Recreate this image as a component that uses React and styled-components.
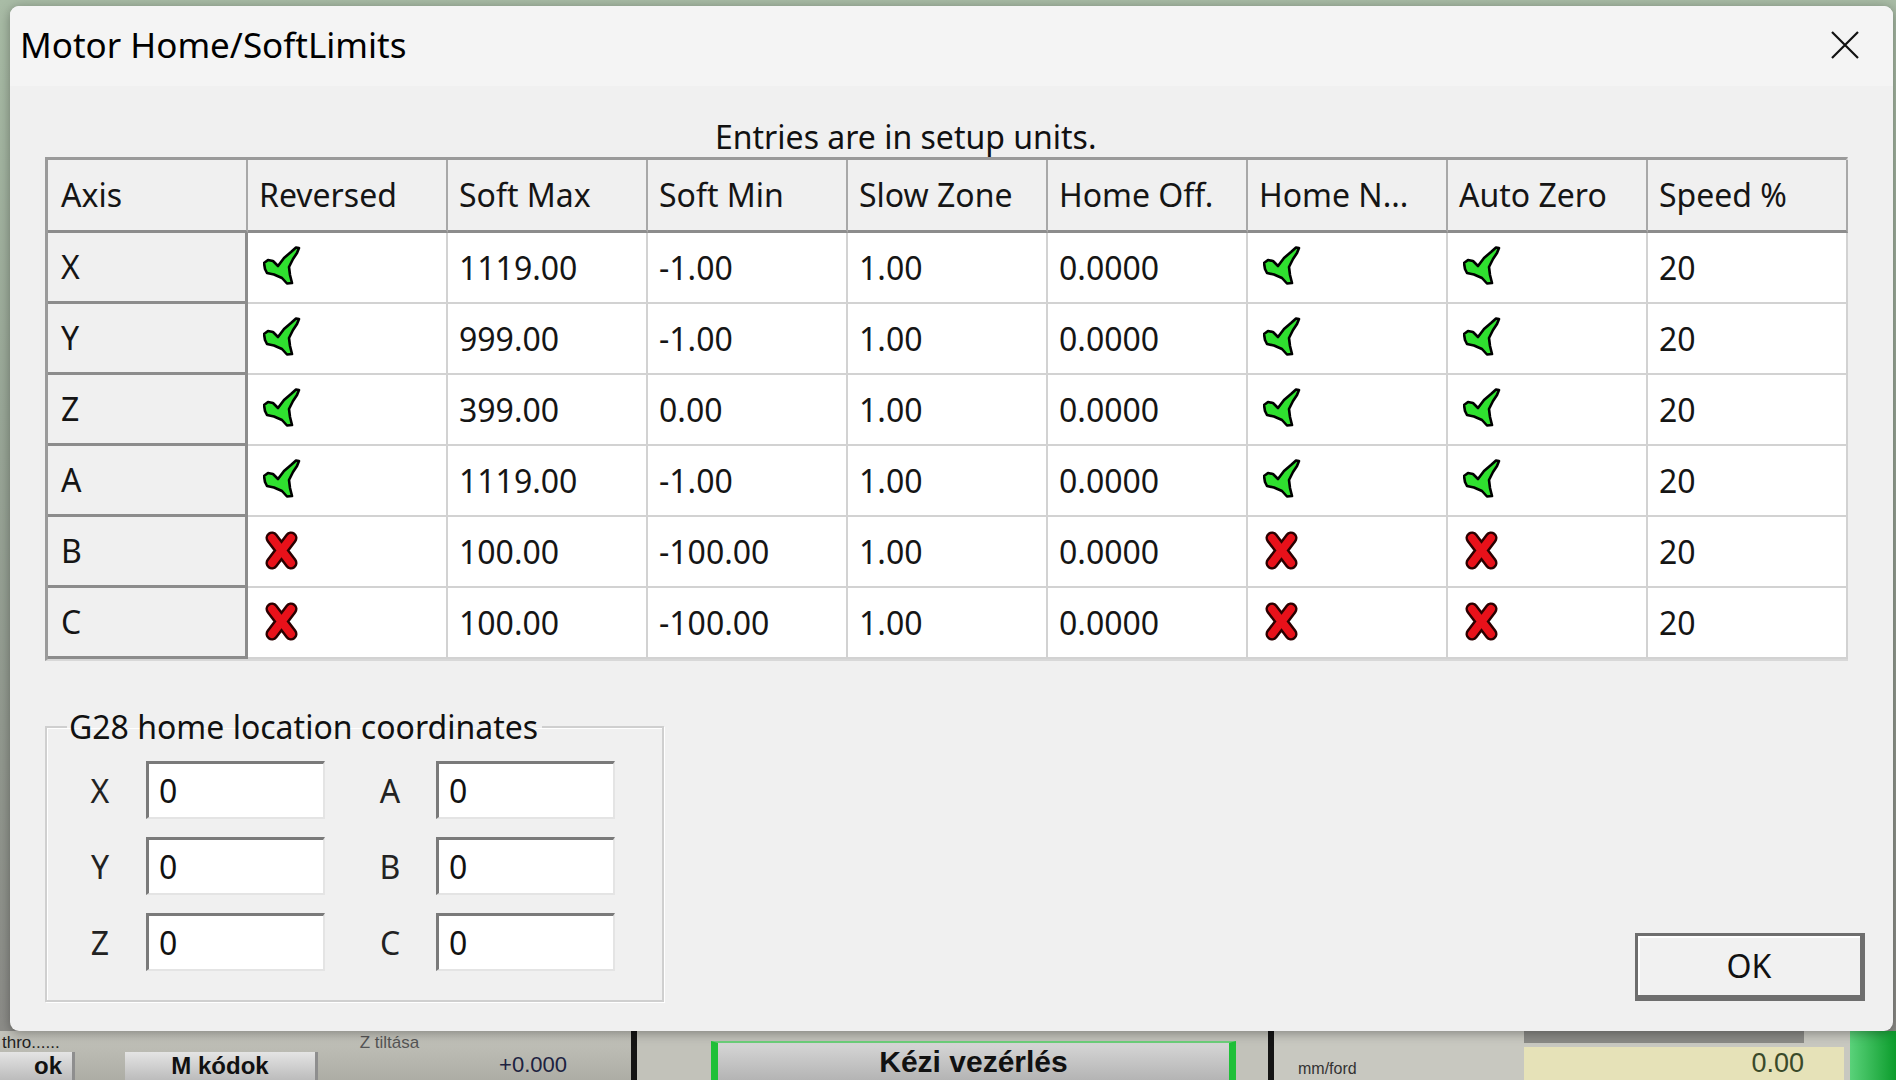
import React from "react";
import styled, { createGlobalStyle } from "styled-components";

const GlobalStyle = createGlobalStyle`
  html, body {
    margin: 0;
    padding: 0;
    background: #9aaa98;
  }
  * { box-sizing: border-box; }
`;

const axes = [
  { axis: "X", rev: true, max: "1119.00", min: "-1.00", homeNeg: true, autoZero: true },
  { axis: "Y", rev: true, max: "999.00", min: "-1.00", homeNeg: true, autoZero: true },
  { axis: "Z", rev: true, max: "399.00", min: "0.00", homeNeg: true, autoZero: true },
  { axis: "A", rev: true, max: "1119.00", min: "-1.00", homeNeg: true, autoZero: true },
  { axis: "B", rev: false, max: "100.00", min: "-100.00", homeNeg: false, autoZero: false },
  { axis: "C", rev: false, max: "100.00", min: "-100.00", homeNeg: false, autoZero: false },
];

const headers = ["Axis", "Reversed", "Soft Max", "Soft Min", "Slow Zone", "Home Off.", "Home N...", "Auto Zero", "Speed %"];

const CheckIcon = () => (
  <svg width="40" height="40" viewBox="0 0 40 40">
    <path
      d="M1 17 L5 14 L10 15 L15 20 L21 12 L28 6 L33 1.5 L36 2 L34 7 L30 13 L26 21 L27 29 L29 37 L24 37.5 L19 32 L11 28.5 L4 27 L2 23 Z"
      fill="#2fe02f"
      stroke="#000"
      strokeWidth="2.6"
      strokeLinejoin="round"
    />
  </svg>
);

const CrossIcon = () => (
  <svg width="40" height="40" viewBox="0 0 40 40">
    <g strokeLinecap="round">
      <path d="M9 8 L28 33 M28 8 L9 33" stroke="#2a0000" strokeWidth="13" />
      <path d="M9 8 L28 33 M28 8 L9 33" stroke="#e8111a" strokeWidth="8" />
    </g>
  </svg>
);

const Flag = ({ on }) => (on ? <CheckIcon /> : <CrossIcon />);

export default function App() {
  return (
    <>
      <GlobalStyle />
      <Screen>
        <AppBody />
        <AppBottom>
          <LeftPanel>
            <TinyRow>
              <TinyText>thro......</TinyText>
              <TinyText $faint>Z tiltása</TinyText>
            </TinyRow>
            <BtnRow>
              <AppButton $w={75} $right>ok</AppButton>
              <AppButton $w={193}>M kódok</AppButton>
              <Readout>+0.000</Readout>
            </BtnRow>
          </LeftPanel>
          <Divider />
          <MidPanel>
            <GreenButton>Kézi vezérlés</GreenButton>
          </MidPanel>
          <Divider />
          <RightPanel>
            <UnitText>mm/ford</UnitText>
            <DisplayCol>
              <DisplayCap />
              <DisplayBox>0.00</DisplayBox>
            </DisplayCol>
          </RightPanel>
          <GreenEdge />
        </AppBottom>

        <Dialog>
          <TitleBar>
            <Title>Motor Home/SoftLimits</Title>
            <CloseBtn>
              <svg width="28" height="28" viewBox="0 0 28 28">
                <path d="M1 1 L27 27 M27 1 L1 27" stroke="#111" strokeWidth="2.2" />
              </svg>
            </CloseBtn>
          </TitleBar>
          <Client>
            <Caption>Entries are in setup units.</Caption>
            <Grid>
              {headers.map((h, i) => (
                <Cell key={h} $head $first={i === 0}>{h}</Cell>
              ))}
              {axes.map((r) => (
                <React.Fragment key={r.axis}>
                  <Cell $axis $first>{r.axis}</Cell>
                  <Cell><Flag on={r.rev} /></Cell>
                  <Cell>{r.max}</Cell>
                  <Cell>{r.min}</Cell>
                  <Cell>1.00</Cell>
                  <Cell>0.0000</Cell>
                  <Cell><Flag on={r.homeNeg} /></Cell>
                  <Cell><Flag on={r.autoZero} /></Cell>
                  <Cell>20</Cell>
                </React.Fragment>
              ))}
            </Grid>
            <BottomRow>
              <GroupBox>
                <Legend>G28 home location coordinates</Legend>
                <Columns>
                  <FieldCol>
                    {["X", "Y", "Z"].map((a) => (
                      <FieldRow key={a}>
                        <FieldLabel>{a}</FieldLabel>
                        <Input defaultValue="0" />
                      </FieldRow>
                    ))}
                  </FieldCol>
                  <FieldCol>
                    {["A", "B", "C"].map((a) => (
                      <FieldRow key={a}>
                        <FieldLabel>{a}</FieldLabel>
                        <Input defaultValue="0" />
                      </FieldRow>
                    ))}
                  </FieldCol>
                </Columns>
              </GroupBox>
              <OkButton>OK</OkButton>
            </BottomRow>
          </Client>
        </Dialog>
      </Screen>
    </>
  );
}

const Screen = styled.div`
  position: relative;
  width: 1896px;
  height: 1080px;
  overflow: hidden;
  display: flex;
  flex-direction: column;
  font-family: "Noto Sans", "Open Sans", sans-serif;
`;

const AppBody = styled.div`
  flex: 1;
  background: linear-gradient(180deg, #a9bca6 0%, #9aa898 40%, #8c8c88 100%);
`;

const AppBottom = styled.div`
  height: 49px;
  display: flex;
  background: #bdbdb5;
`;

const LeftPanel = styled.div`
  width: 631px;
  display: flex;
  flex-direction: column;
  background: linear-gradient(180deg, #c4c4bc, #adada5);
`;

const TinyRow = styled.div`
  height: 20px;
  display: flex;
  align-items: flex-end;
  gap: 300px;
  padding-left: 2px;
`;

const TinyText = styled.span`
  font-family: "Liberation Sans Narrow", "Liberation Sans", sans-serif;
  font-size: 17px;
  line-height: 17px;
  color: ${(p) => (p.$faint ? "#555" : "#222")};
`;

const BtnRow = styled.div`
  flex: 1;
  display: flex;
  align-items: flex-end;
  gap: 50px;
  padding-right: 64px;
`;

const AppButton = styled.div`
  width: ${(p) => p.$w}px;
  height: 28px;
  background: linear-gradient(180deg, #e4e4e4, #bcbcbc);
  border-right: 3px solid #8e8e8e;
  font-family: "Liberation Sans", sans-serif;
  font-weight: bold;
  font-size: 24px;
  line-height: 28px;
  text-align: ${(p) => (p.$right ? "right" : "center")};
  padding-right: ${(p) => (p.$right ? "10px" : "0")};
  color: #111;
  white-space: nowrap;
`;

const Readout = styled.div`
  margin: 0 0 2px auto;
  font-family: "Liberation Sans", sans-serif;
  font-size: 22px;
  line-height: 26px;
  color: #1c2240;
`;

const Divider = styled.div`
  width: 6px;
  background: #141414;
`;

const MidPanel = styled.div`
  width: 631px;
  padding: 10px 0 0 74px;
  background: #c2c2ba;
`;

const GreenButton = styled.div`
  width: 525px;
  height: 100%;
  border-left: 7px solid #1fc038;
  border-right: 7px solid #1fc038;
  border-top: 2px solid #6ccf7a;
  background: linear-gradient(180deg, #d6d6d6, #b4b4b4);
  font-family: "Liberation Sans", sans-serif;
  font-weight: bold;
  font-size: 30px;
  line-height: 37px;
  text-align: center;
  color: #111;
`;

const RightPanel = styled.div`
  flex: 1;
  display: flex;
  align-items: flex-end;
  justify-content: space-between;
  padding: 0 6px 0 24px;
  background: #c8c8c0;
`;

const UnitText = styled.span`
  font-family: "Liberation Sans", sans-serif;
  font-size: 16px;
  line-height: 22px;
  color: #333;
`;

const DisplayCol = styled.div`
  width: 320px;
  height: 100%;
  display: flex;
  flex-direction: column;
`;

const DisplayCap = styled.div`
  height: 12px;
  width: 280px;
  background: #8a8a86;
`;

const DisplayBox = styled.div`
  flex: 1;
  margin-top: 4px;
  background: #e6e2b8;
  text-align: right;
  padding-right: 40px;
  font-family: "Liberation Sans", sans-serif;
  font-size: 27px;
  line-height: 33px;
  color: #3a4a2a;
`;

const GreenEdge = styled.div`
  width: 46px;
  background: linear-gradient(90deg, #5ad27a, #0c9c2c);
`;

const Dialog = styled.div`
  position: absolute;
  left: 10px;
  top: 6px;
  width: 1883px;
  height: 1025px;
  background: #f0f0f0;
  border-radius: 9px;
  box-shadow: 0 2px 12px rgba(0, 0, 0, 0.35);
  overflow: hidden;
  display: flex;
  flex-direction: column;
`;

const TitleBar = styled.div`
  height: 80px;
  display: flex;
  align-items: flex-start;
  justify-content: space-between;
  padding: 14px 34px 0 10px;
  background: #f4f4f4;
`;

const Title = styled.div`
  font-size: 35px;
  line-height: 50px;
  color: #000;
`;

const CloseBtn = styled.div`
  width: 28px;
  height: 28px;
  margin-top: 11px;
  display: flex;
`;

const Client = styled.div`
  flex: 1;
  display: flex;
  flex-direction: column;
  padding: 31px 28px 29px 35px;
  font-size: 32px;
  color: #111;
`;

const Caption = styled.div`
  height: 40px;
  line-height: 40px;
  padding-left: 670px;
`;

const Grid = styled.div`
  display: grid;
  grid-template-columns: repeat(9, 200px);
  grid-template-rows: 73px;
  grid-auto-rows: 71px;
  width: 1803px;
  border-top: 3px solid #9a9a9a;
  border-left: 3px solid #9a9a9a;
  border-right: 2px solid #d8d8d8;
  border-bottom: 2px solid #d8d8d8;
  background: #fff;
`;

const Cell = styled.div`
  display: flex;
  align-items: center;
  padding-left: ${(p) => (p.$first ? "13px" : "11px")};
  line-height: 1;
  white-space: nowrap;
  overflow: hidden;
  background: ${(p) => (p.$head || p.$axis ? "#f0f0f0" : "#fff")};
  border-right: ${(p) => (p.$axis ? "3px solid #8c8c8c" : p.$head ? "2px solid #a8a8a8" : "2px solid #d2d2d2")};
  border-bottom: ${(p) => (p.$head || p.$axis ? "3px solid #8c8c8c" : "2px solid #d2d2d2")};
  color: #151515;

  svg { margin-left: 4px; margin-top: -4px; }
`;

const BottomRow = styled.div`
  margin-top: auto;
  display: flex;
  align-items: flex-end;
  justify-content: space-between;
`;

const GroupBox = styled.fieldset`
  width: 619px;
  height: 295px;
  margin: 0;
  padding: 14px 0 0 26px;
  border: 2px solid #cfcfcf;
  box-shadow: inset 1px 1px 0 #fff, 1px 1px 0 #fff;
`;

const Legend = styled.legend`
  padding: 0 4px 0 2px;
  margin-left: -6px;
  line-height: 40px;
  color: #111;
`;

const Columns = styled.div`
  display: flex;
  gap: 38px;
`;

const FieldCol = styled.div`
  display: flex;
  flex-direction: column;
  gap: 18px;
`;

const FieldRow = styled.div`
  display: flex;
  align-items: center;
  gap: 19px;
`;

const FieldLabel = styled.span`
  width: 54px;
  text-align: center;
  color: #222;
`;

const Input = styled.input`
  width: 179px;
  height: 58px;
  padding: 0 0 0 10px;
  border: none;
  border-top: 3px solid #7a7a7a;
  border-left: 3px solid #7a7a7a;
  border-right: 2px solid #e4e4e4;
  border-bottom: 2px solid #e4e4e4;
  background: #fff;
  font-family: "Noto Sans", sans-serif;
  font-size: 32px;
  color: #111;
  outline: none;
`;

const OkButton = styled.button`
  width: 230px;
  height: 68px;
  margin-bottom: 1px;
  border: 3px solid #6e6e6e;
  border-right-width: 5px;
  border-bottom-width: 6px;
  box-shadow: inset 2px 2px 0 #ffffff;
  background: #f1f1f1;
  font-family: "Noto Sans", sans-serif;
  font-size: 32px;
  color: #111;
`;
